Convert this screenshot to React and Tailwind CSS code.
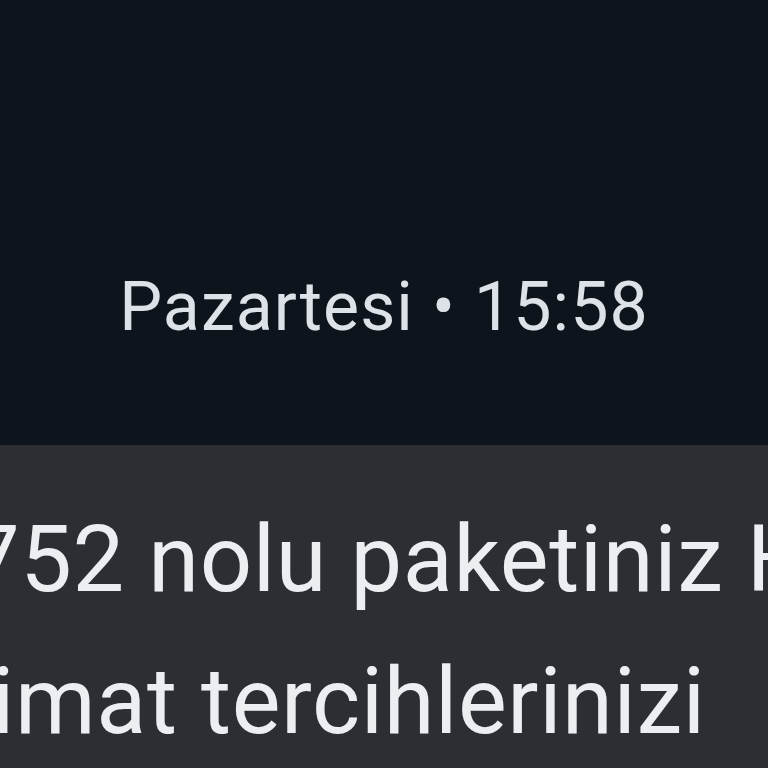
export default function App() {
  return (
    <div className="w-[768px] h-[768px] overflow-hidden bg-[#0d141b] flex flex-col" style={{ fontFamily: 'Roboto, "Noto Sans", sans-serif' }}>
      <div className="h-[445px] shrink-0 pt-[273px] flex justify-center">
        <div className="text-[68px] leading-none tracking-[1.1px] text-[#dde2e8] whitespace-nowrap">Pazartesi • 15:58</div>
      </div>
      <div className="flex-1 bg-[#2b2e32] pt-[44px] overflow-hidden">
        <div className="text-[92px] leading-[142px] tracking-[0.6px] text-[#eceef1] whitespace-nowrap">
          <div className="ml-[-32px]">752 nolu paketiniz Hazır</div>
          <div className="ml-[-8px]">imat tercihlerinizi</div>
        </div>
      </div>
    </div>
  );
}
